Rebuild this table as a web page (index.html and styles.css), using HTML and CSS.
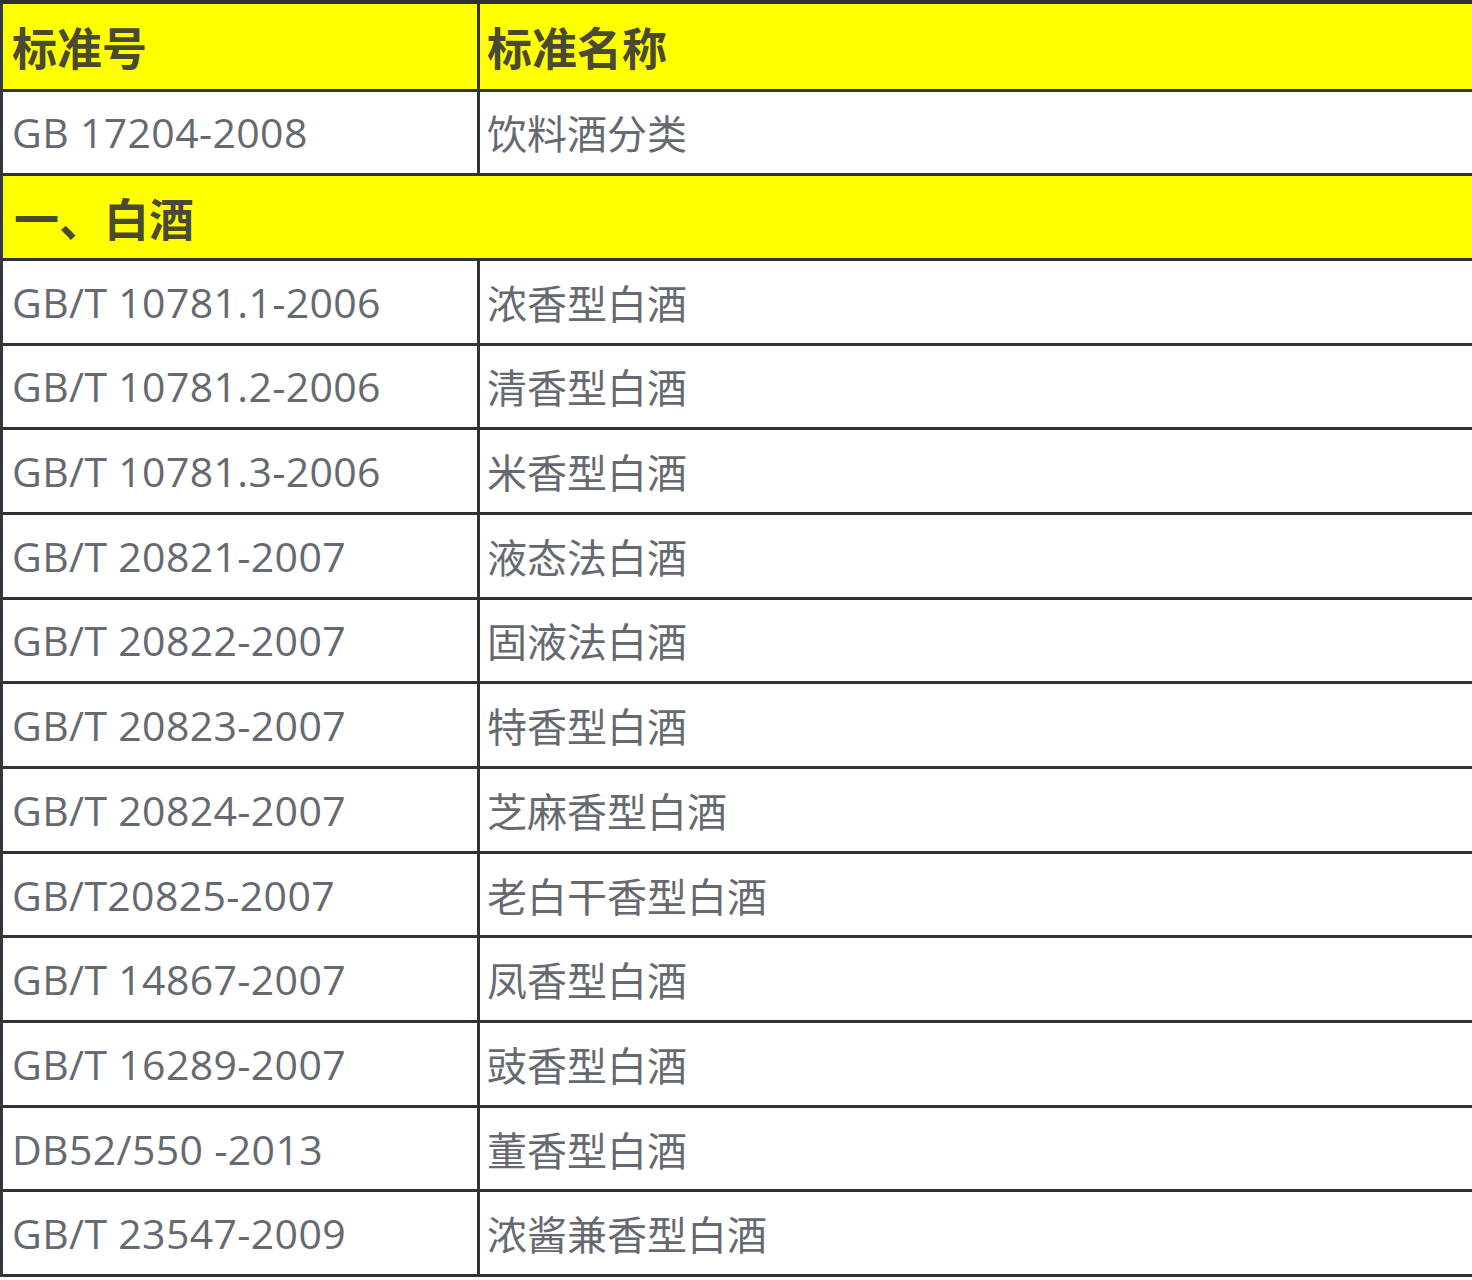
FILE: index.html
```html
<!DOCTYPE html>
<html lang="zh-CN">
<head>
<meta charset="utf-8">
<title>白酒标准</title>
<link rel="stylesheet" href="styles.css">
</head>
<body>
<div class="table">
  <div class="row head">
    <div class="cell c1">标准号</div>
    <div class="cell c2">标准名称</div>
  </div>
  <div class="row">
    <div class="cell c1 code">GB 17204-2008</div>
    <div class="cell c2 name">饮料酒分类</div>
  </div>
  <div class="row section">
    <div class="cell full">一、白酒</div>
  </div>
  <div class="row">
    <div class="cell c1 code">GB/T 10781.1-2006</div>
    <div class="cell c2 name">浓香型白酒</div>
  </div>
  <div class="row">
    <div class="cell c1 code">GB/T 10781.2-2006</div>
    <div class="cell c2 name">清香型白酒</div>
  </div>
  <div class="row">
    <div class="cell c1 code">GB/T 10781.3-2006</div>
    <div class="cell c2 name">米香型白酒</div>
  </div>
  <div class="row">
    <div class="cell c1 code">GB/T 20821-2007</div>
    <div class="cell c2 name">液态法白酒</div>
  </div>
  <div class="row">
    <div class="cell c1 code">GB/T 20822-2007</div>
    <div class="cell c2 name">固液法白酒</div>
  </div>
  <div class="row">
    <div class="cell c1 code">GB/T 20823-2007</div>
    <div class="cell c2 name">特香型白酒</div>
  </div>
  <div class="row">
    <div class="cell c1 code">GB/T 20824-2007</div>
    <div class="cell c2 name">芝麻香型白酒</div>
  </div>
  <div class="row">
    <div class="cell c1 code">GB/T20825-2007</div>
    <div class="cell c2 name">老白干香型白酒</div>
  </div>
  <div class="row">
    <div class="cell c1 code">GB/T 14867-2007</div>
    <div class="cell c2 name">凤香型白酒</div>
  </div>
  <div class="row">
    <div class="cell c1 code">GB/T 16289-2007</div>
    <div class="cell c2 name">豉香型白酒</div>
  </div>
  <div class="row">
    <div class="cell c1 code">DB52/550 -2013</div>
    <div class="cell c2 name">董香型白酒</div>
  </div>
  <div class="row">
    <div class="cell c1 code">GB/T 23547-2009</div>
    <div class="cell c2 name">浓酱兼香型白酒</div>
  </div>
</div>
</body>
</html>
```
FILE: styles.css
```css
html, body {
  margin: 0;
  padding: 0;
  background: #ffffff;
  overflow: hidden;
}

.table {
  width: 1520px;
  border-top: 4px solid #2b3034;
  border-left: 3px solid #34383c;
  font-family: "Open Sans", "Noto Sans CJK SC", sans-serif;
}

.row {
  display: flex;
  box-sizing: border-box;
  height: 84.7px;
  border-bottom: 3px solid #303438;
  background: #ffffff;
}

.row.head {
  height: 87.5px;
}

.head,
.section {
  background: #ffff00;
}

.cell {
  box-sizing: border-box;
  display: flex;
  align-items: center;
  white-space: nowrap;
}

.c1 {
  width: 477px;
  flex: none;
  border-right: 3px solid #303438;
  padding-left: 9px;
}

.c2 {
  flex: 1;
  padding-left: 7px;
}

.full {
  flex: 1;
  padding-left: 11px;
}

.head .cell,
.section .cell {
  font-family: "Noto Sans CJK SC", sans-serif;
  font-weight: 700;
  font-size: 45px;
  color: #4a4a30;
}

.code {
  font-size: 41px;
  letter-spacing: 0.35px;
  color: #666a70;
}

.name {
  font-family: "Noto Sans CJK SC", sans-serif;
  font-size: 40px;
  color: #666a70;
}
```
